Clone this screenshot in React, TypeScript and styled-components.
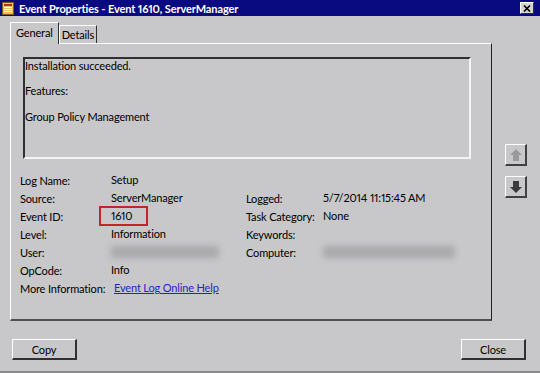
import React from "react";
import styled, { createGlobalStyle } from "styled-components";

const Global = createGlobalStyle`
  html, body { margin: 0; padding: 0; background: #c8c7ca; }
  * { box-sizing: border-box; }
`;

const Window = styled.div`
  width: 540px;
  height: 373px;
  background: #c8c7ca;
  display: flex;
  flex-direction: column;
  font-family: Lato, "Open Sans", sans-serif;
  font-size: 11px;
  letter-spacing: -0.15px;
  font-variant-numeric: proportional-nums;
  color: #000000;
  border-bottom: 2px solid #8a898c;
  overflow: hidden;
`;

const TitleBar = styled.div`
  height: 16px;
  background: #0a0a80;
  display: flex;
  align-items: center;
  padding: 0 6px 0 2px;
  gap: 5px;
`;

const TitleText = styled.div`
  flex: 1;
  color: #ffffff;
  font-family: Lato, sans-serif;
  font-weight: bold;
  font-size: 11px;
  letter-spacing: -0.1px;
  white-space: nowrap;
`;

const CloseBox = styled.div`
  width: 14px;
  height: 12px;
  background: #d4d3d6;
  border-top: 1px solid #ffffff;
  border-left: 1px solid #ffffff;
  border-right: 1px solid #303030;
  border-bottom: 1px solid #303030;
  display: flex;
  align-items: center;
  justify-content: center;
`;

const Body = styled.div`
  flex: 1;
  display: flex;
  flex-direction: column;
  padding: 6px 0 0 10px;
`;

const Main = styled.div`
  display: flex;
  gap: 13px;
`;

const TabArea = styled.div`
  width: 482px;
  display: flex;
  flex-direction: column;
`;

const TabRow = styled.div`
  display: flex;
  align-items: flex-end;
  height: 21px;
  position: relative;
  z-index: 1;
`;

const Tab = styled.div<{ $active?: boolean }>`
  height: ${(p) => (p.$active ? "22px" : "18px")};
  margin-bottom: ${(p) => (p.$active ? "-1px" : "0")};
  padding: 0 ${(p) => (p.$active ? "5px" : "2px")};
  padding-bottom: ${(p) => (p.$active ? "3px" : "0")};
  background: #c8c7ca;
  border-top: 1px solid #ffffff;
  border-left: 1px solid #ffffff;
  border-right: 1px solid #303030;
  display: flex;
  align-items: center;
  white-space: nowrap;
`;

const Panel = styled.div`
  height: 278px;
  border-top: 1px solid #ffffff;
  border-left: 1px solid #ffffff;
  border-right: 1px solid #202020;
  border-bottom: 2px solid #505050;
  padding: 13px 20px 0 9px;
  display: flex;
  flex-direction: column;
`;

const MessageBox = styled.div`
  margin-left: 3px;
  width: 448px;
  height: 102px;
  border-top: 2px solid #303030;
  border-left: 2px solid #303030;
  border-right: 2px solid #f4f4f4;
  border-bottom: 2px solid #f4f4f4;
  padding: 1px 0 0 0;
`;

const MsgLine = styled.div`
  height: 12.7px;
  line-height: 12.7px;
  white-space: pre;
`;

const Fields = styled.div`
  margin-top: 12px;
  display: grid;
  grid-template-columns: 91px 135px 77px 1fr;
  grid-auto-rows: 18px;
  align-items: center;
`;

const Label = styled.div`
  white-space: nowrap;
`;

const Value = styled.div`
  white-space: nowrap;
  position: relative;
  line-height: 14px;
`;

const Highlight = styled.span`
  position: absolute;
  left: -12px;
  top: -3px;
  width: 49px;
  height: 20px;
  border: 2px solid #c0262a;
`;

const Blur = styled.div<{ $w: number }>`
  width: ${(p) => p.$w}px;
  height: 12px;
  background: #a9a8ab;
  filter: blur(3px);
`;

const Link = styled.a`
  color: #2424c8;
  text-decoration: underline;
  margin-left: 3px;
`;

const Side = styled.div`
  padding-top: 122px;
  display: flex;
  flex-direction: column;
  gap: 10px;
`;

const ArrowButton = styled.div`
  width: 22px;
  height: 22px;
  border-top: 1px solid #ffffff;
  border-left: 1px solid #ffffff;
  border-right: 2px solid #404040;
  border-bottom: 2px solid #404040;
  display: flex;
  align-items: center;
  justify-content: center;
`;

const Footer = styled.div`
  display: flex;
  justify-content: space-between;
  padding: 18px 14px 0 2px;
`;

const Button = styled.div`
  width: 65px;
  height: 21px;
  border-top: 1px solid #ffffff;
  border-left: 1px solid #ffffff;
  border-right: 2px solid #303030;
  border-bottom: 2px solid #303030;
  display: flex;
  align-items: center;
  justify-content: center;
`;

const AppIcon = () => (
  <svg width="12" height="13" viewBox="0 0 12 13">
    <rect x="0.5" y="0.5" width="11" height="12" fill="#e8c060" stroke="#806020" />
    <rect x="2" y="2" width="8" height="2" fill="#c03020" />
    <rect x="2" y="5" width="8" height="1" fill="#ffffff" />
    <rect x="2" y="7" width="8" height="1" fill="#ffffff" />
    <rect x="2" y="9" width="8" height="1" fill="#ffffff" />
  </svg>
);

const XIcon = () => (
  <svg width="8" height="7" viewBox="0 0 8 7">
    <path d="M1 0.5 L7 6.5 M7 0.5 L1 6.5" stroke="#000" strokeWidth="1.6" />
  </svg>
);

const BlockArrow = ({ up, color }: { up?: boolean; color: string }) => (
  <svg width="12" height="12" viewBox="0 0 12 12" style={{ transform: up ? "none" : "rotate(180deg)" }}>
    <polygon points="6,0 12,6 9,6 9,12 3,12 3,6 0,6" fill={color} />
  </svg>
);

export default function App() {
  return (
    <>
      <Global />
      <Window>
        <TitleBar>
          <AppIcon />
          <TitleText>Event Properties - Event 1610, ServerManager</TitleText>
          <CloseBox>
            <XIcon />
          </CloseBox>
        </TitleBar>
        <Body>
          <Main>
            <TabArea>
              <TabRow>
                <Tab $active>General</Tab>
                <Tab>Details</Tab>
              </TabRow>
              <Panel>
                <MessageBox>
                  <MsgLine>Installation succeeded.</MsgLine>
                  <MsgLine> </MsgLine>
                  <MsgLine>Features:</MsgLine>
                  <MsgLine> </MsgLine>
                  <MsgLine>Group Policy Management</MsgLine>
                </MessageBox>
                <Fields>
                  <Label>Log Name:</Label>
                  <Value>Setup</Value>
                  <Label />
                  <Value />
                  <Label>Source:</Label>
                  <Value>ServerManager</Value>
                  <Label>Logged:</Label>
                  <Value>5/7/2014 11:15:45 AM</Value>
                  <Label>Event ID:</Label>
                  <Value>
                    1610
                    <Highlight />
                  </Value>
                  <Label>Task Category:</Label>
                  <Value>None</Value>
                  <Label>Level:</Label>
                  <Value>Information</Value>
                  <Label>Keywords:</Label>
                  <Value />
                  <Label>User:</Label>
                  <Value>
                    <Blur $w={108} />
                  </Value>
                  <Label>Computer:</Label>
                  <Value>
                    <Blur $w={132} />
                  </Value>
                  <Label>OpCode:</Label>
                  <Value>Info</Value>
                  <Label />
                  <Value />
                  <Label>More Information:</Label>
                  <Value>
                    <Link href="#">Event Log Online Help</Link>
                  </Value>
                </Fields>
              </Panel>
            </TabArea>
            <Side>
              <ArrowButton>
                <BlockArrow up color="#9a999c" />
              </ArrowButton>
              <ArrowButton>
                <BlockArrow color="#3a3a3a" />
              </ArrowButton>
            </Side>
          </Main>
          <Footer>
            <Button>Copy</Button>
            <Button>Close</Button>
          </Footer>
        </Body>
      </Window>
    </>
  );
}
